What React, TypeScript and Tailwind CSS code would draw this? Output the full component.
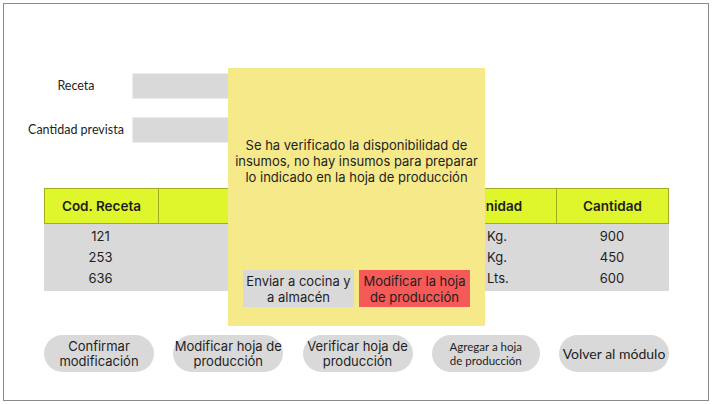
import React from "react";

const inter = { fontFamily: "Inter, 'Noto Sans', sans-serif" };

export default function App() {
  const rows = [
    { cod: "121", uni: "Kg.", cant: "900" },
    { cod: "253", uni: "Kg.", cant: "450" },
    { cod: "636", uni: "Lts.", cant: "600" },
  ];
  return (
    <div className="w-[712px] h-[404px] bg-white p-[3px] text-[#1e1e1e] font-['Inter',sans-serif]">
      <div className="relative w-[706px] h-[398px] border border-[#8a8a8a] flex flex-col">
        {/* form */}
        <div className="flex flex-col gap-[18px] pt-[69px] pl-[16px]">
          <div className="flex items-center h-[26px]">
            <div className="w-[112px] text-center text-[12.5px] font-['Lato',sans-serif]">Receta</div>
            <div className="w-[200px] h-[26px] bg-[#d9d9d9] border border-[#ececec]" />
          </div>
          <div className="flex items-center h-[26px]">
            <div className="w-[112px] text-center text-[12.5px] font-['Lato',sans-serif]">Cantidad prevista</div>
            <div className="w-[200px] h-[26px] bg-[#d9d9d9] border border-[#ececec]" />
          </div>
        </div>

        {/* table */}
        <div className="ml-[40px] mt-[45px] w-[625px] flex flex-col text-[13px]">
          <div className="flex h-[36px] bg-[#dff52c] font-semibold text-[13.5px] border border-[#a3ab1f]">
            <div className="w-[113px] flex items-center justify-center">Cod. Receta</div>
            <div className="w-[284px] border-l border-[#a3ab1f]" />
            <div className="w-[114px] flex items-center justify-center">Unidad</div>
            <div className="flex-1 border-l border-[#a3ab1f] flex items-center justify-center">Cantidad</div>
          </div>
          <div className="bg-[#d9d9d9] h-[67px] pt-[2px] flex flex-col">
            {rows.map((r) => (
              <div key={r.cod} className="flex h-[21px] items-center">
                <div className="w-[113px] text-center">{r.cod}</div>
                <div className="w-[284px]" />
                <div className="w-[114px] pl-[46px]">{r.uni}</div>
                <div className="flex-1 text-center">{r.cant}</div>
              </div>
            ))}
          </div>
        </div>

        {/* pills */}
        <div className="ml-[40px] mt-[44px] w-[625px] flex justify-between text-[13px] leading-[15px]">
          <div className="w-[110px] h-[37px] rounded-full bg-[#d9d9d9] flex items-center justify-center text-center">
            Confirmar<br />modificación
          </div>
          <div className="w-[110px] h-[37px] rounded-full bg-[#d9d9d9] flex items-center justify-center text-center whitespace-nowrap">
            Modificar hoja de<br />producción
          </div>
          <div className="w-[110px] h-[37px] rounded-full bg-[#d9d9d9] flex items-center justify-center text-center whitespace-nowrap">
            Verificar hoja de<br />producción
          </div>
          <div className="w-[108px] h-[37px] rounded-full bg-[#d9d9d9] flex items-center justify-center text-center text-[11.5px] leading-[14px] font-['Lato',sans-serif] whitespace-nowrap">
            Agregar a hoja<br />de producción
          </div>
          <div className="w-[110px] h-[37px] rounded-full bg-[#d9d9d9] flex items-center justify-center text-center text-[14px] font-['Lato',sans-serif] whitespace-nowrap">
            Volver al módulo
          </div>
        </div>

        {/* modal overlay */}
        <div className="absolute left-[224px] top-[64px] w-[257px] h-[258px] bg-[#f5e98a] flex flex-col items-center pt-[69px] pb-[19px]" style={inter}>
          <p className="text-[13px] leading-[16px] text-center px-[6px]">
            Se ha verificado la disponibilidad de insumos, no hay insumos para preparar lo indicado en la hoja de producción
          </p>
          <div className="mt-auto flex gap-[5px] text-[13px] leading-[16px]">
            <div className="w-[111px] h-[37px] bg-[#d9d9d9] flex items-center justify-center text-center">
              Enviar a cocina y<br />a almacén
            </div>
            <div className="w-[111px] h-[37px] bg-[#f55a58] flex items-center justify-center text-center">
              Modificar la hoja<br />de producción
            </div>
          </div>
        </div>
      </div>
    </div>
  );
}
